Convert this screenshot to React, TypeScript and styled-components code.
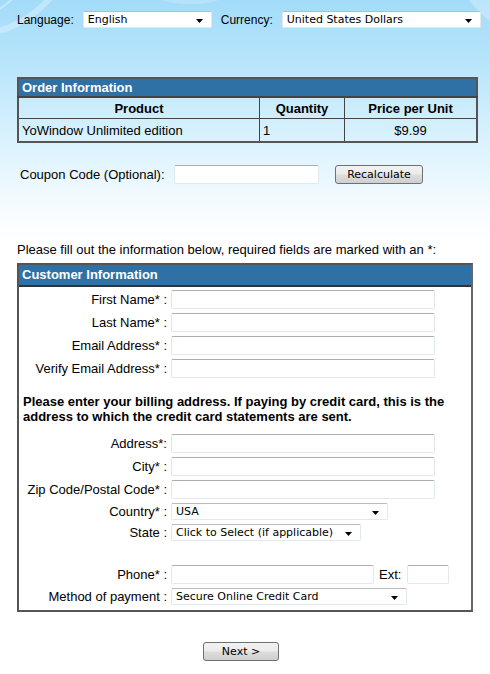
import styled, { createGlobalStyle } from 'styled-components';

const GlobalStyle = createGlobalStyle`
  html, body {
    margin: 0;
    padding: 0;
    background: #fff;
  }
  body {
    font-family: "Liberation Sans", Arial, sans-serif;
    font-size: 13px;
    color: #000;
  }
`;

const Page = styled.div`
  position: relative;
  width: 490px;
  min-height: 674px;
  overflow: hidden;
  background: linear-gradient(
    to bottom,
    #a3dcf9 0px,
    #b6e4fb 60px,
    #cdedfc 110px,
    #e6f6fe 170px,
    #f8fcff 215px,
    #ffffff 240px
  );
`;

// faint swirls in the sky at the top of the page
const Swirl = styled.svg`
  position: absolute;
  top: 0;
  left: 0;
  pointer-events: none;
`;

const Content = styled.div`
  position: relative;
  padding: 11px 0 0 17px;
`;

const TopBar = styled.div`
  display: flex;
  align-items: center;
  height: 17px;
`;

const BarLabel = styled.span`
  font-size: 12px;
  margin-right: 9px;
`;

const SelectBox = styled.div<{ $w: number }>`
  position: relative;
  box-sizing: border-box;
  width: ${p => p.$w}px;
  height: 17px;
  margin-right: 9px;
  padding: 0 0 0 4px;
  background: #fff;
  border: 1px solid #e2e8ee;
  border-top-color: #b8bcc2;
  border-radius: 2px;
  font-family: "DejaVu Sans", Verdana, sans-serif;
  font-size: 11px;
  line-height: 15px;
  white-space: nowrap;
  color: #000;
`;

const Arrow = styled.svg`
  position: absolute;
  right: 8px;
  top: 7px;
`;

const OrderTable = styled.table`
  margin-top: 49px;
  width: 461px;
  border-collapse: collapse;
  border: 2px solid #555;
  font-size: 13px;
`;

const BlueHead = styled.th`
  background: #3071a5;
  color: #fff;
  font-size: 13px;
  font-weight: bold;
  text-align: left;
  padding: 0 3px;
  height: 17px;
  border: 1px solid #444;
  border-bottom-width: 2px;
`;

const ColHead = styled.th<{ $w?: number }>`
  width: ${p => (p.$w ? `${p.$w}px` : 'auto')};
  font-size: 13px;
  font-weight: bold;
  text-align: center;
  height: 20px;
  padding: 0;
  border: 1px solid #444;
`;

const Cell = styled.td<{ $center?: boolean }>`
  text-align: ${p => (p.$center ? 'center' : 'left')};
  padding: 1px 3px 0;
  height: 21px;
  border: 1px solid #444;
  font-size: 13px;
`;

const CouponRow = styled.div`
  display: flex;
  align-items: center;
  margin-top: 22px;
  padding-left: 3px;
  height: 19px;
`;

const CouponLabel = styled.span`
  flex: 0 0 154px;
  font-size: 13px;
  white-space: nowrap;
`;

const TextInput = styled.div<{ $w: number }>`
  box-sizing: border-box;
  flex-shrink: 0;
  width: ${p => p.$w}px;
  height: 19px;
  background: #fff;
  border: 1px solid #e2e8ee;
  border-top-color: #abadb3;
  border-radius: 2px;
`;

const GrayButton = styled.button<{ $w: number; $ml?: number }>`
  box-sizing: border-box;
  flex-shrink: 0;
  width: ${p => p.$w}px;
  height: 19px;
  margin-left: ${p => p.$ml ?? 0}px;
  padding: 0;
  border: 1px solid #707070;
  border-radius: 3px;
  background: linear-gradient(to bottom, #f2f2f2 0%, #ebebeb 48%, #dddddd 52%, #cfcfcf 100%);
  font-family: "DejaVu Sans", Verdana, sans-serif;
  font-size: 11px;
  color: #000;
`;

const Intro = styled.p`
  margin: 58px 0 6px;
  font-size: 13px;
  line-height: 15px;
`;

const CustomerBox = styled.div`
  box-sizing: border-box;
  width: 456px;
  background: #fff;
  border: 2px solid #555;
  border-right-color: #666;
  padding-bottom: 5px;
`;

const BoxHeader = styled.div`
  height: 20px;
  background: #3071a5;
  color: #fff;
  font-size: 13px;
  font-weight: bold;
  line-height: 20px;
  padding-left: 3px;
  border-bottom: 2px solid #333;
`;

const FormGrid = styled.div`
  display: grid;
  grid-template-columns: 148px auto;
  column-gap: 4px;
  row-gap: 4px;
  align-items: center;
  justify-items: start;
  padding-top: 3px;
`;

const FieldLabel = styled.div`
  justify-self: end;
  font-size: 13px;
  line-height: 15px;
  white-space: nowrap;
`;

const Spacer = styled.div<{ $h: number }>`
  grid-column: 1 / -1;
  height: ${p => p.$h}px;
`;

const BillingNote = styled.div`
  grid-column: 1 / -1;
  padding: 0 4px;
  margin: -2px 0 6px;
  font-size: 13px;
  font-weight: bold;
  line-height: 15px;
`;

const InlineGroup = styled.div`
  display: flex;
  align-items: center;
`;

const ExtLabel = styled.span`
  margin: 0 6px 0 5px;
  font-size: 13px;
`;

const Footer = styled.div`
  display: flex;
  justify-content: center;
  padding: 30px 8px 0 0;
  margin-left: -17px;
`;

const Select = ({ w, value }: { w: number; value: string }) => (
  <SelectBox $w={w}>
    {value}
    <Arrow width="7" height="4" viewBox="0 0 7 4">
      <path d="M0 0h7L3.5 4z" fill="#000" />
    </Arrow>
  </SelectBox>
);

const App = () => {
  return (
    <Page>
      <GlobalStyle />
      <Swirl width="490" height="60" viewBox="0 0 490 60">
        <circle cx="-40" cy="-55" r="75" fill="none" stroke="#ffffff" strokeOpacity="0.35" strokeWidth="2" />
        <circle cx="-30" cy="-70" r="105" fill="none" stroke="#ffffff" strokeOpacity="0.3" strokeWidth="6" />
        <ellipse cx="190" cy="-40" rx="70" ry="44" fill="#ffffff" fillOpacity="0.18" />
        <circle cx="560" cy="-70" r="115" fill="#ffffff" fillOpacity="0.28" />
      </Swirl>
      <Content>
        <TopBar>
          <BarLabel>Language:</BarLabel>
          <Select w={129} value="English" />
          <BarLabel>Currency:</BarLabel>
          <Select w={199} value="United States Dollars" />
        </TopBar>

        <OrderTable>
          <thead>
            <tr>
              <BlueHead colSpan={3}>Order Information</BlueHead>
            </tr>
            <tr>
              <ColHead $w={240}>Product</ColHead>
              <ColHead $w={84}>Quantity</ColHead>
              <ColHead>Price per Unit</ColHead>
            </tr>
          </thead>
          <tbody>
            <tr>
              <Cell>YoWindow Unlimited edition</Cell>
              <Cell>1</Cell>
              <Cell $center>$9.99</Cell>
            </tr>
          </tbody>
        </OrderTable>

        <CouponRow>
          <CouponLabel>Coupon Code (Optional):</CouponLabel>
          <TextInput $w={145} />
          <GrayButton $w={88} $ml={16}>Recalculate</GrayButton>
        </CouponRow>

        <Intro>Please fill out the information below, required fields are marked with an *:</Intro>

        <CustomerBox>
          <BoxHeader>Customer Information</BoxHeader>
          <FormGrid>
            <FieldLabel>First Name* :</FieldLabel>
            <TextInput $w={264} />
            <FieldLabel>Last Name* :</FieldLabel>
            <TextInput $w={264} />
            <FieldLabel>Email Address* :</FieldLabel>
            <TextInput $w={264} />
            <FieldLabel>Verify Email Address* :</FieldLabel>
            <TextInput $w={264} />
            <Spacer $h={10} />
            <BillingNote>
              Please enter your billing address. If paying by credit card, this is the address to which the
              credit card statements are sent.
            </BillingNote>
            <FieldLabel>Address*:</FieldLabel>
            <TextInput $w={264} />
            <FieldLabel>City* :</FieldLabel>
            <TextInput $w={264} />
            <FieldLabel>Zip Code/Postal Code* :</FieldLabel>
            <TextInput $w={264} />
            <FieldLabel>Country* :</FieldLabel>
            <Select w={217} value="USA" />
            <FieldLabel>State :</FieldLabel>
            <Select w={190} value="Click to Select (if applicable)" />
            <Spacer $h={16} />
            <FieldLabel>Phone* :</FieldLabel>
            <InlineGroup>
              <TextInput $w={203} />
              <ExtLabel>Ext:</ExtLabel>
              <TextInput $w={42} />
            </InlineGroup>
            <FieldLabel>Method of payment :</FieldLabel>
            <Select w={236} value="Secure Online Credit Card" />
          </FormGrid>
        </CustomerBox>

        <Footer>
          <GrayButton $w={76}>Next &gt;</GrayButton>
        </Footer>
      </Content>
    </Page>
  );
};

export default App;
